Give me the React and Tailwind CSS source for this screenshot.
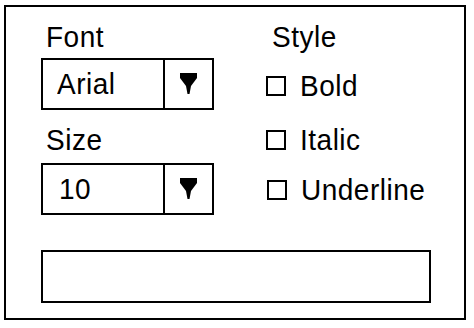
// Font dialog: two combo boxes, style checkboxes and a preview box

const COMBOS = [
  { label: "Font", value: "Arial", labelGap: "mt-0", boxGap: "mt-[7px]", pad: "pl-[14px]" },
  { label: "Size", value: "10", labelGap: "mt-[16px]", boxGap: "mt-[9px]", pad: "pl-[16px]" },
];

const STYLES = [
  { name: "Bold", gap: "mt-[21px]", shift: "ml-0" },
  { name: "Italic", gap: "mt-[26px]", shift: "ml-0" },
  { name: "Underline", gap: "mt-[22px]", shift: "ml-px" },
];

// Black drop-down arrow, a wide top tapering to a point
function Arrow() {
  return (
    <svg width="17" height="22" viewBox="0 0 17 22">
      <polygon points="0,0 17,0 17,5 11,13 9.5,21 7.5,21 6,13 0,5" fill="#000" />
    </svg>
  );
}

const TXT = "inline-block text-[28px] leading-none tracking-[0.5px] scale-y-[1.08]";

export default function App() {
  return (
    <div
      className="w-[474px] h-[328px] bg-white pt-[5px] pl-[4px] text-black"
      style={{ fontFamily: "'Liberation Sans', Arial, sans-serif" }}
    >
      <div className="w-[462px] h-[315px] border-2 border-black pl-[35px] pt-[16px]">
        <div className="flex gap-[52px]">
          {/* Font / Size combos */}
          <div className="flex flex-col w-[173px]">
            {COMBOS.map((c) => (
              <div key={c.label} className="flex flex-col">
                <div className={`${c.labelGap} pl-[5px] h-[28px]`}>
                  <span className={TXT}>{c.label}</span>
                </div>
                <div className={`${c.boxGap} flex h-[52px] border-2 border-black`}>
                  <div className={`w-[120px] flex items-center ${c.pad}`}>
                    <span className={TXT}>{c.value}</span>
                  </div>
                  <div className="flex-1 flex items-center justify-center border-l-2 border-black">
                    <Arrow />
                  </div>
                </div>
              </div>
            ))}
          </div>

          {/* Style checkboxes */}
          <div className="flex flex-col">
            <div className="ml-[6px] h-[28px]">
              <span className={TXT}>Style</span>
            </div>
            {STYLES.map((s) => (
              <div key={s.name} className={`${s.gap} ${s.shift} flex items-center gap-[14px]`}>
                <div className="w-[20px] h-[20px] border-2 border-black" />
                <span className={TXT}>{s.name}</span>
              </div>
            ))}
          </div>
        </div>

        {/* Preview box */}
        <div className="mt-[35px] w-[390px] h-[53px] border-2 border-black" />
      </div>
    </div>
  );
}
